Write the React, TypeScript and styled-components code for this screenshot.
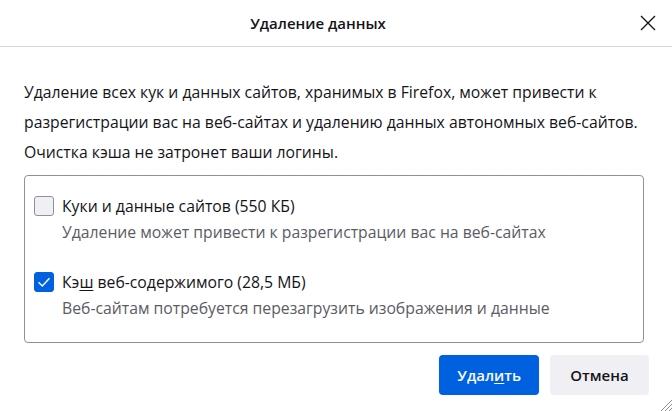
import React from "react";
import styled, { createGlobalStyle } from "styled-components";

const Global = createGlobalStyle`
  html, body { margin: 0; padding: 0; background: #ffffff; }
  body { font-family: "Open Sans", "Noto Sans", sans-serif; color: #15141a; }
  * { box-sizing: border-box; }
`;

const Dialog = styled.div`
  position: relative;
  width: 672px;
  height: 411px;
  background: #fff;
  display: flex;
  flex-direction: column;
  overflow: hidden;
`;

const Header = styled.div`
  height: 47px;
  border-bottom: 1px solid #d7d7db;
  display: flex;
  align-items: center;
  padding: 0 16px 0 0;
`;

const Title = styled.h1`
  flex: 1;
  text-align: center;
  margin: 0;
  font-size: 15px;
  font-weight: 600;
  color: #15141a;
  line-height: 20px;
`;

const CloseButton = styled.button`
  width: 24px;
  height: 24px;
  border: 0;
  background: transparent;
  padding: 0;
  display: flex;
  align-items: center;
  justify-content: center;
  margin-right: -4px;
`;

const Body = styled.div`
  padding: 30px 24px 0 24px;
  display: flex;
  flex-direction: column;
`;

const Intro = styled.p`
  margin: 0;
  font-size: 15.75px;
  line-height: 30px;
  color: #15141a;
`;

const OptionsBox = styled.div`
  margin-top: 8px;
  border: 1px solid #8f8f9d;
  border-radius: 4px;
  padding: 20px 9px 24px 9px;
  display: flex;
  flex-direction: column;
  gap: 30px;
  width: 620px;
`;

const Option = styled.div`
  display: grid;
  grid-template-columns: 20px 1fr;
  column-gap: 8px;
  row-gap: 6px;
  align-items: center;
`;

const Box = styled.span<{ $checked?: boolean }>`
  width: 20px;
  height: 20px;
  border-radius: 3px;
  border: 1px solid ${(p) => (p.$checked ? "#0061e0" : "#8f8f9d")};
  background: ${(p) => (p.$checked ? "#0061e0" : "#f0f0f4")};
  display: flex;
  align-items: center;
  justify-content: center;
`;

const Label = styled.span`
  font-size: 15.75px;
  line-height: 20px;
  color: #15141a;
`;

const Description = styled.span`
  grid-column: 2;
  font-size: 15.75px;
  line-height: 20px;
  color: #5b5b66;
`;

const Key = styled.span`
  text-decoration: underline;
  text-underline-offset: 2px;
`;

const Footer = styled.div`
  display: flex;
  justify-content: flex-end;
  gap: 11px;
  padding: 12px 23px 0 0;
`;

const Button = styled.button<{ $primary?: boolean }>`
  height: 40px;
  border: 0;
  border-radius: 4px;
  font-family: inherit;
  font-size: 15px;
  font-weight: 600;
  padding: 0 18px;
  min-width: 99px;
  background: ${(p) => (p.$primary ? "#0061e0" : "#f0f0f4")};
  color: ${(p) => (p.$primary ? "#fbfbfe" : "#15141a")};
`;

const Grip = styled.svg`
  position: absolute;
  right: 0;
  bottom: 0;
`;

export default function App() {
  return (
    <>
      <Global />
      <Dialog>
        <Header>
          <Title>Удаление данных</Title>
          <CloseButton aria-label="Закрыть">
            <svg width="16" height="16" viewBox="0 0 16 16">
              <path d="M1 1 L15 15 M15 1 L1 15" stroke="#15141a" strokeWidth="1.4" fill="none" />
            </svg>
          </CloseButton>
        </Header>
        <Body>
          <Intro>
            Удаление всех кук и данных сайтов, хранимых в Firefox, может привести к
            разрегистрации вас на веб-сайтах и удалению данных автономных веб-сайтов.
            Очистка кэша не затронет ваши логины.
          </Intro>
          <OptionsBox>
            <Option>
              <Box />
              <Label>
                Куки и <Key>д</Key>анные сайтов (550 КБ)
              </Label>
              <Description>Удаление может привести к разрегистрации вас на веб-сайтах</Description>
            </Option>
            <Option>
              <Box $checked>
                <svg width="16" height="16" viewBox="0 0 16 16">
                  <path d="M2.5 8.2 L6.3 12 L13.5 4.2" stroke="#fff" strokeWidth="1.4" fill="none" />
                </svg>
              </Box>
              <Label>
                Кэ<Key>ш</Key> веб-содержимого (28,5 МБ)
              </Label>
              <Description>Веб-сайтам потребуется перезагрузить изображения и данные</Description>
            </Option>
          </OptionsBox>
        </Body>
        <Footer>
          <Button $primary>
            Удал<Key>и</Key>ть
          </Button>
          <Button>Отмена</Button>
        </Footer>
        <Grip width="14" height="14" viewBox="0 0 14 14">
          <path d="M14 3 L3 14 M14 7 L7 14 M14 11 L11 14" stroke="#8f8f9d" strokeWidth="1" />
        </Grip>
      </Dialog>
    </>
  );
}
